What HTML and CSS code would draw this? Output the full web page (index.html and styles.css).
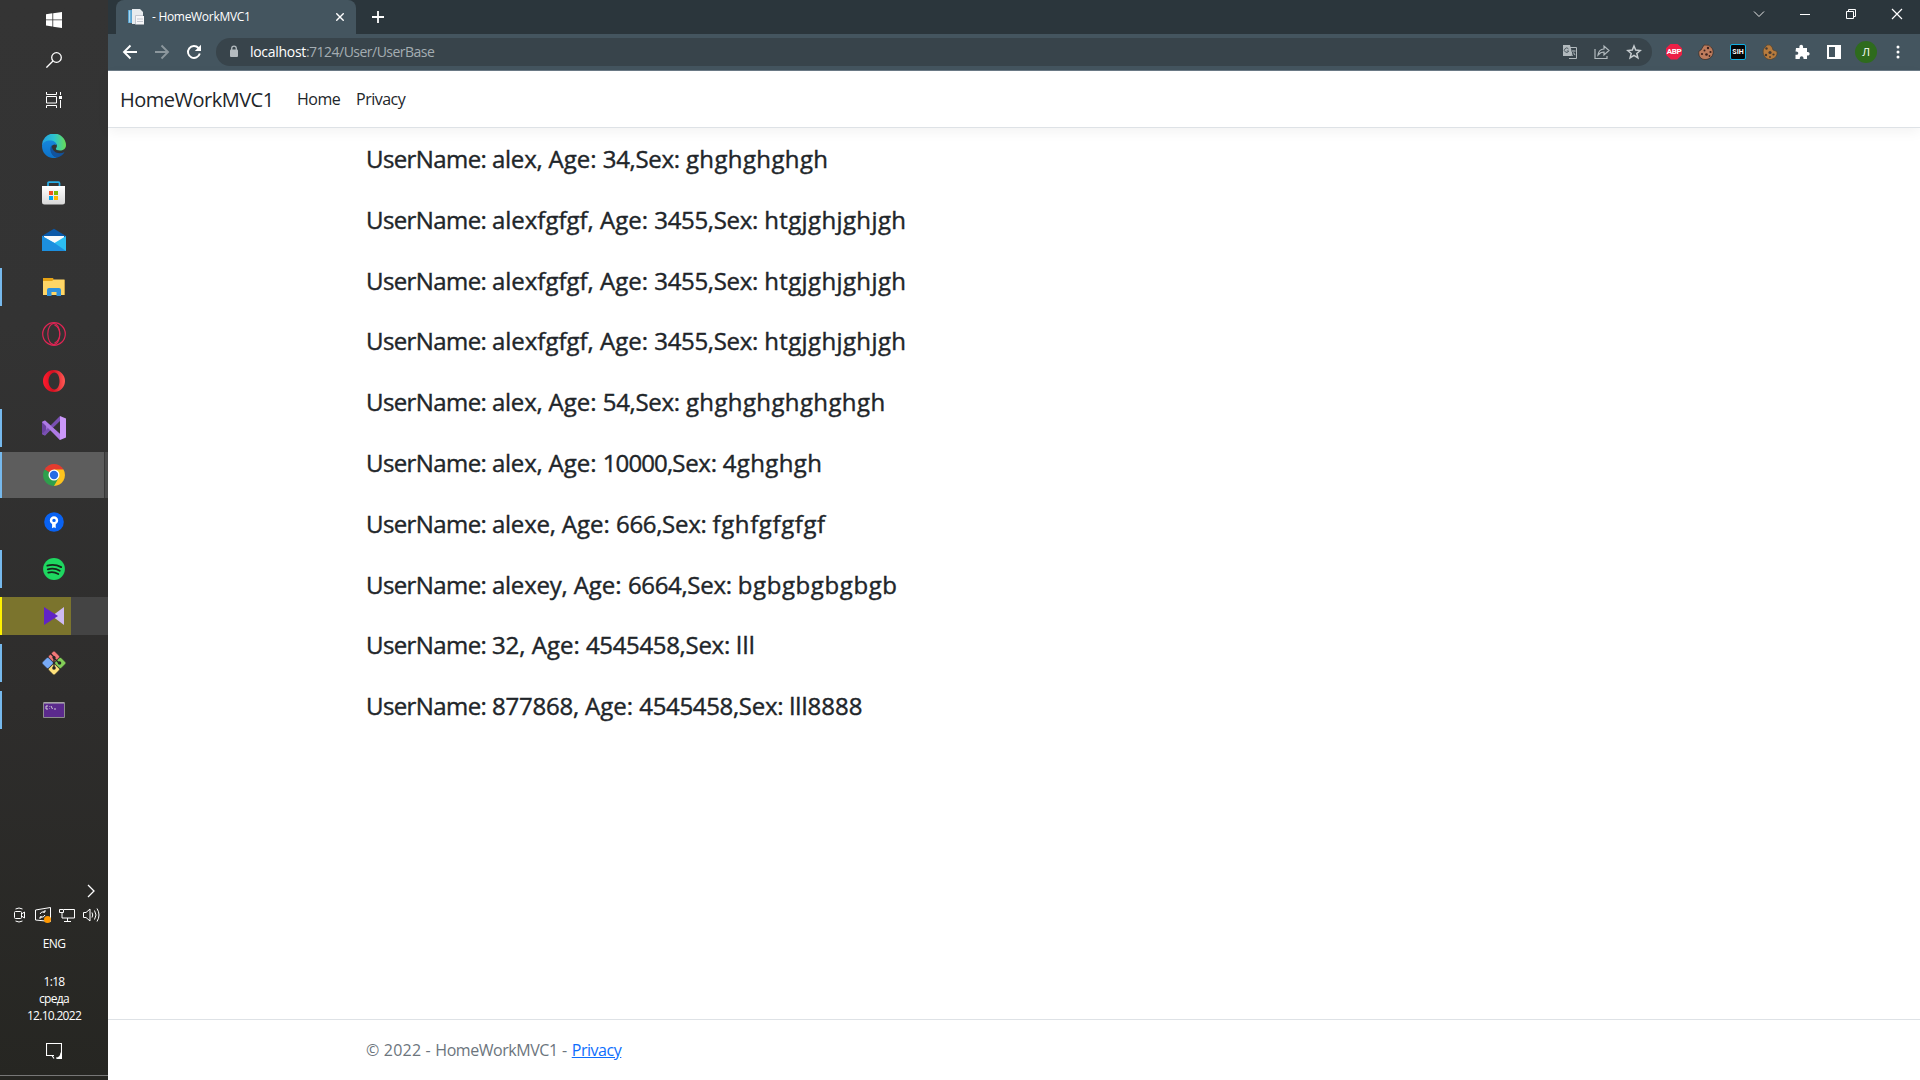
FILE: index.html
```html
<!DOCTYPE html>
<html lang="ru">
<head>
<meta charset="utf-8">
<title>- HomeWorkMVC1</title>
<link rel="stylesheet" href="styles.css">
</head>
<body>
<aside class="taskbar">
  <div class="system">
    <div class="sys-slot"><svg width="16" height="16" viewBox="0 0 16 16" fill="#fff"><path d="M0 2.2 6.4 1.3V7.4H0zM7.2 1.2 16 0v7.4H7.2zM0 8.3h6.4v6.2L0 13.6zM7.2 8.3H16V16l-8.8-1.3z"/></svg></div>
    <div class="sys-slot"><svg width="16" height="16" viewBox="0 0 16 16" fill="none" stroke="#fff" stroke-width="1.3"><circle cx="10.5" cy="5.5" r="4.8"/><path d="M7 9 .4 15.6"/></svg></div>
    <div class="sys-slot"><svg width="16" height="16" viewBox="0 0 16 16" fill="none" stroke="#fff" stroke-width="1"><path d="M.5 0v2.5h10V0M.5 16v-2.500h10V16M.5 4.500h10v6.500H.5zM14.500 0v3M14.500 8v8"/><path d="M13 4h3v3h-3z" fill="#fff" stroke="none"/></svg></div>
  </div>
  <div class="apps">
    <div class="app"><svg width="24" height="24" viewBox="0 0 24 24"><defs><linearGradient id="e1"><stop offset="0" stop-color="#239ee0"/><stop offset=".5" stop-color="#2cc3d0"/><stop offset="1" stop-color="#68dd55"/></linearGradient><linearGradient id="e2" x2="0" y2="1"><stop offset="0" stop-color="#1686dc"/><stop offset="1" stop-color="#0c72c9"/></linearGradient></defs><path d="M0 12A12 12 0 0 1 24 11c0 4-3 5.500-6 5.500-3.500 0-4.800-1.200-3.800-2.600C16.500 11 13 7.500 9 7.500c-5 0-8.500 2.500-9 4.500z" fill="url(#e1)"/><path d="M0 12c.5-3.500 4-5.500 8-5.500 3.500 0 6.500 2 6.500 4.500-4-2-6 2-5.500 5 .5 4 3 7 6.500 7.500C7 26 0 20 0 12z" fill="url(#e2)"/><path d="M9.500 11C6 17 11 23.500 15.500 23.500c3.500-1 6-3 7-5.500-5 2.500-12 1.500-13-7z" fill="#12539d"/></svg></div>
    <div class="app"><svg width="24" height="24" viewBox="0 0 24 24"><defs><linearGradient id="st" x2="0" y2="1"><stop stop-color="#fff"/><stop offset="1" stop-color="#d8d8d8"/></linearGradient></defs><path d="M6 7V2.200Q6 1.200 7 1.200h9.500q1 0 1 1V7" fill="none" stroke="#27aee8" stroke-width="1.700"/><path d="M0 5h23v16q0 2.500-2.500 2.500h-18Q0 23.500 0 21z" fill="url(#st)"/><path fill="#f25022" d="M7 10h4v4H7z"/><path fill="#7fba00" d="M12 10h4v4h-4z"/><path fill="#00a4ef" d="M7 15h4v4H7z"/><path fill="#ffb900" d="M12 15h4v4h-4z"/></svg></div>
    <div class="app"><svg width="24" height="24" viewBox="0 0 24 24"><path d="M0 8 12 .8 24 8v4H0z" fill="#0a58a8"/><path d="M2 8h20v10H2z" fill="#f7f9fb"/><path d="M0 8v15h24V8L12.500 15z" fill="#2cbdf1"/><path d="M0 8v15h24L12.500 15z" fill="#1c8fdf"/></svg></div>
    <div class="app running"><svg width="24" height="24" viewBox="0 0 24 24"><path d="M1 3h10l1 2h10.500v15H1z" fill="#e6a315"/><path d="M1 6h9l2-1.500h10.500V20H1z" fill="#ffd666"/><path d="M5 21v-6q0-2 2-2h10q2 0 2 2v6h-4.500v-4h-5v4z" fill="#2f91dc"/></svg></div>
    <div class="app"><svg width="24" height="24" viewBox="0 0 24 24" fill="none" stroke="#df2554"><circle cx="12" cy="12" r="11.300" stroke-width="1.200"/><ellipse cx="11.800" cy="12" rx="6" ry="10.500" stroke-width="1.100"/><path d="M12.500 3c7 3 7 15 0 18" stroke-width="1.200"/></svg></div>
    <div class="app"><svg width="24" height="24" viewBox="0 0 24 24"><defs><linearGradient id="op"><stop stop-color="#ff1b2d"/><stop offset=".45" stop-color="#d40f20"/><stop offset="1" stop-color="#ff5a55"/></linearGradient></defs><path fill-rule="evenodd" d="M12 1a11 11 0 1 0 0 22 11 11 0 0 0 0-22zm.5 2.500c3 0 5 3.800 5 8.500s-2 8.500-5 8.500-6-3.800-6-8.500 3-8.500 6-8.500z" fill="url(#op)"/></svg></div>
    <div class="app running"><svg width="24" height="24" viewBox="0 0 24 24"><path d="M0 6 3 4.500 18 18v6L8.500 13.500 3 19.500 0 18z" fill="#9a68d2"/><path d="M0 6 4 9v7l-4 2z" fill="#6a419f"/><path d="M3 19.500 18 5V0L0 18z" fill="#7950b2"/><path d="M0 6 3 4.500 18 18v6z" fill="#ad7ae4"/><path d="m18 0 6 2.500v19L18 24z" fill="#cb98fa"/></svg></div>
    <div class="app running active"><svg width="22" height="22" viewBox="0 0 22 22"><path d="M11 11 1.500 5.500A11 11 0 0 1 20.500 5.500z" fill="#e33b2e"/><path d="M11 11V5.500h9.500A11 11 0 0 1 11 22z" fill="#fcc31e"/><path d="M1.500 5.500A11 11 0 0 0 11 22l4.700-8.300L11 11z" fill="#2e9f4c"/><circle cx="11" cy="11" r="5.500" fill="#fff"/><circle cx="11" cy="11" r="4.200" fill="#276ce5"/></svg></div>
    <div class="app raised"><svg width="20" height="20" viewBox="0 0 21 21"><circle cx="10.500" cy="10.500" r="10.300" fill="#0962f2"/><circle cx="10.500" cy="8.800" r="3.100" fill="none" stroke="#fff" stroke-width="2.600"/><path d="M8.500 11.500h3.800V17l-1.800-1-2 1z" fill="#fff"/></svg></div>
    <div class="app running raised"><svg width="22" height="22" viewBox="0 0 23 23"><circle cx="11.500" cy="11.500" r="11.400" fill="#1ed760"/><path d="M4.500 8q7.500-2.200 14.500 1.500M5 11.800q7-1.800 12.500 1.500M5.500 15.300q5.500-1.500 10.500 1.400" fill="none" stroke="#16251b" stroke-width="1.900" stroke-linecap="round"/></svg></div>
    <div class="app running alert"><svg width="22" height="20" viewBox="0 0 22 20"><path d="M21 1v18L9 10z" fill="#cdbaf2"/><path d="M1 1v18l14-9z" fill="#6123c5"/></svg></div>
    <div class="app running"><svg width="24" height="24" viewBox="0 0 24 24"><g stroke="#252525" stroke-width=".5"><rect x="7.700" y="1.400" width="8.600" height="8.600" rx="1.300" transform="rotate(45 12 5.700)" fill="#f17878"/><rect x="1.400" y="7.700" width="8.600" height="8.600" rx="1.300" transform="rotate(45 5.700 12)" fill="#78aaf5"/><rect x="14" y="7.700" width="8.600" height="8.600" rx="1.300" transform="rotate(45 18.300 12)" fill="#82cd57"/><rect x="7.700" y="14" width="8.600" height="8.600" rx="1.300" transform="rotate(45 12 18.300)" fill="#ffe17a"/></g><path d="m8 2 4 4v11M12 7l5 5" fill="none" stroke="#242424" stroke-width="1.300"/><g fill="#242424"><circle cx="12" cy="6.500" r="1.600"/><circle cx="12" cy="17" r="1.800"/><circle cx="17.500" cy="12" r="1.800"/></g></svg></div>
    <div class="app running"><svg width="22" height="16" viewBox="0 0 22 16"><path d="M.5.5h21v15H.5z" fill="#5b2a8d" stroke="#8d8d8d"/><path d="M1 1h20" stroke="#bbb"/><path d="M5 4H3v3h2M6.500 4.500v.5M6.500 6.500V7M8 4l1.500 3M11 7h2" stroke="#ddd" fill="none" stroke-width=".9"/></svg></div>
  </div>
  <div class="tray">
    <svg class="chevron" width="8" height="14" viewBox="0 0 8 14" fill="none" stroke="#fff" stroke-width="1.300"><path d="m1 1 6 6-6 6"/></svg>
    <div class="tray-icons">
      <svg width="16" height="16" viewBox="0 0 16 16" fill="none" stroke="#fff"><rect x="3.500" y="4.500" width="7" height="7" rx="1"/><path d="m10.500 7 3-2v6l-3-2M4.500 2q3.500-2 7 0M4.500 14q3.500 2 7 0"/></svg>
      <svg width="16" height="16" viewBox="0 0 16 16" fill="none" stroke="#fff"><path d="M.5 3 15.500.5v14L.5 13zM5 7q1-3 5-2V3m0 2H8M10 8q-1 3-5 2v2m0-2h2"/><circle cx="12.500" cy="12.500" r="3.500" fill="#ff9800" stroke="none"/></svg>
      <svg width="16" height="16" viewBox="0 0 16 16" fill="none" stroke="#fff"><path d="M5 2.500h10.500v8.500H3V6M.5 2.500h4v3h-4zM8.500 11v3M5 14.500h7"/></svg>
      <svg width="17" height="16" viewBox="0 0 17 16" fill="none" stroke="#fff"><path d="M.5 5.500h2.500l4-3.500v12l-4-3.500H.5zM9 5.500q1.500 2.500 0 5M11.500 3.500q3 4.500 0 9M14 1.500q4 6.500 0 13"/></svg>
    </div>
    <div class="lang">ENG</div>
    <div class="clock"><span>1:18</span><span>среда</span><span>12.10.2022</span></div>
    <svg class="notice" width="16" height="16" viewBox="0 0 16 16" fill="none" stroke="#fff" stroke-width="1.100"><path d="M8 12.500H6L8 15.500M6 12.500H.5v-12h15V10"/><path d="M14.500 9.500a4 4 0 1 1-4.500 5q4 0 4.500-5z" fill="#fff" stroke="none"/></svg>
  </div>
</aside>
<div class="browser">
  <div class="tabstrip">
    <div class="tab">
      <svg width="16" height="16" viewBox="0 0 16 16"><path d="M0 1h5v13H0z" fill="#58a3d0"/><path d="M1.200 1.500h1v12h-1z" fill="#bfe3f5"/><path d="M4 0h8l3 3v12H4z" fill="#e7ebee"/><path d="M8 7h8v8.500H8z" fill="#f6f6f8"/><path d="M9 10h6M9 12.500h6M7.500 6.500H15M7.500 6.500v9" stroke="#c3c7d0" fill="none"/></svg>
      <span class="tab-title">- HomeWorkMVC1</span>
      <svg width="8" height="8" viewBox="0 0 8 8" stroke="#fff" stroke-width="1.400"><path d="m.3.300 7.400 7.400m0-7.400L.3 7.700"/></svg>
    </div>
    <svg class="newtab" width="12" height="12" viewBox="0 0 12 12" stroke="#fff" stroke-width="1.800"><path d="M6 0v12M0 6h12"/></svg>
    <div class="window-buttons">
      <svg width="12" height="12" viewBox="0 0 12 12" fill="none" stroke="#e8e8e8"><path d="m1 3.500 5 5 5-5"/></svg>
      <svg width="12" height="12" viewBox="0 0 12 12" stroke="#fff"><path d="M1 6.500h10"/></svg>
      <svg width="12" height="12" viewBox="0 0 12 12" fill="none" stroke="#fff"><path d="M1.500 3.500h7v7h-7zM3.500 3.500v-2h7v7h-2"/></svg>
      <svg width="12" height="12" viewBox="0 0 12 12" stroke="#fff" stroke-width="1.200"><path d="m1 1 10 10M11 1 1 11"/></svg>
    </div>
  </div>
  <div class="toolbar">
    <div class="nav-buttons">
      <svg width="16" height="16" viewBox="0 0 16 16" fill="none" stroke="#fff" stroke-width="1.900"><path d="M15 8H2M8.500 1.500 2 8l6.500 6.500"/></svg>
      <svg width="16" height="16" viewBox="0 0 16 16" fill="none" stroke="#8c979d" stroke-width="1.900"><path d="M1 8h13M7.500 1.500 14 8l-6.500 6.500"/></svg>
      <svg width="16" height="16" viewBox="0 0 16 16" fill="none" stroke="#fff" stroke-width="1.900"><path d="M13.800 9.500A6 6 0 1 1 12.500 4L14 5.500"/><path d="M15 .800V7H8.800z" fill="#fff" stroke="none"/></svg>
    </div>
    <div class="address">
      <svg width="10" height="13" viewBox="0 0 10 13"><rect x="1" y="4.500" width="8" height="7.500" rx="1" fill="#b4bbbf"/><path d="M2.700 5V3.500a2.300 2.300 0 0 1 4.600 0V5" fill="none" stroke="#b4bbbf" stroke-width="1.300"/></svg>
      <span class="url"><b>localhost</b>:7124/User/UserBase</span>
      <div class="address-icons">
        <svg width="16" height="16" viewBox="0 0 16 16"><path d="M6 3.500h8.500v11H7" fill="none" stroke="#b2babe"/><path d="M1 1h7l3 11H1z" fill="#b2babe"/><path d="M6.500 5a2.200 2.200 0 1 0 .2 2H4.800M9.500 7h4M11.500 6v1M13 7q-1 3-3 4.500M10.500 9l3 3" fill="none" stroke="#4e5b62"/><path d="M10 7h3.500M11.500 8.500l1.500 2.500" stroke="#b2babe"/></svg>
        <svg width="16" height="16" viewBox="0 0 16 16" fill="none" stroke="#b2babe" stroke-width="1.200"><path d="M1 5v9.500h12V12"/><path d="M4 11q.5-5.500 6-6V2l5 4.500-5 4.500V8Q6.500 8 4 11z"/></svg>
        <svg width="16" height="16" viewBox="0 0 16 16" fill="none" stroke="#c6cccf" stroke-width="1.500"><path d="m8 2 1.700 4.100 4.500.4-3.400 2.900 1.100 4.400L8 11.400l-3.900 2.400 1.100-4.400-3.400-2.900 4.500-.4z"/></svg>
      </div>
    </div>
    <div class="extensions">
      <div class="abp">ABP</div>
      <svg width="16" height="16" viewBox="0 0 16 16"><path d="M6 1q5-1 8 3c3 5 0 11-6 11.500C2 16 0 11 1 7l2-1z" fill="#bd7b5c" stroke="#322925" stroke-width=".7"/><g fill="#3b211d"><circle cx="10" cy="4" r="1.200"/><circle cx="6.500" cy="6.500" r="1"/><circle cx="12.500" cy="8" r="1.100"/><circle cx="4" cy="10" r="1.100"/><circle cx="8.500" cy="10.500" r="1.300"/><circle cx="11.500" cy="12" r=".9"/></g></svg>
      <div class="sih">SIH</div>
      <svg width="16" height="16" viewBox="0 0 16 16"><path d="M5 1q3-1 5 2l1 3 4 1.500q1 6-6 8C3 16 0 10 1.500 5z" fill="#b77b3d" stroke="#55422d" stroke-width=".7"/><g fill="#453b34"><circle cx="4.500" cy="4.500" r="1.200"/><circle cx="8" cy="8.500" r="1.600"/><circle cx="4" cy="11" r="1.200"/><circle cx="11.500" cy="10.500" r="1.100"/><circle cx="8" cy="13" r=".9"/></g></svg>
      <svg width="16" height="16" viewBox="0 0 16 16" fill="#fff"><path d="M2 4h3.500C4.500-.3 10 -.3 9 4h4v4c3.500-.8 3.500 4.300 0 3.500V15H9.500c.5-3.700-4.200-3.700-3.700 0H1.500v-4.200C5.200 11.300 5.200 7 1.500 7.500z"/></svg>
      <svg width="16" height="16" viewBox="0 0 16 16"><path d="M1 1h14v14H1zM3 3v10h6V3z" fill="#fff" fill-rule="evenodd"/></svg>
      <div class="avatar">Л</div>
      <svg width="16" height="16" viewBox="0 0 16 16" fill="#fff"><circle cx="8" cy="3" r="1.500"/><circle cx="8" cy="8" r="1.500"/><circle cx="8" cy="13" r="1.500"/></svg>
    </div>
  </div>
  <div class="page">
    <header class="navbar"><span class="brand">HomeWorkMVC1</span><span class="nav-link home">Home</span><span class="nav-link">Privacy</span></header>
    <main class="users">
      <h4><span class="label">UserName: </span><span class="name">alex, </span>Age: <span class="age">34,</span><span class="sex">Sex: </span><span class="value">ghghghghgh</span></h4>
      <h4><span class="label">UserName: </span>alexfgfgf, Age: <span class="age">3455,</span><span class="sex">Sex: </span><span class="value">htgjghjghjgh</span></h4>
      <h4><span class="label">UserName: </span>alexfgfgf, Age: <span class="age">3455,</span><span class="sex">Sex: </span><span class="value">htgjghjghjgh</span></h4>
      <h4><span class="label">UserName: </span>alexfgfgf, Age: <span class="age">3455,</span><span class="sex">Sex: </span><span class="value">htgjghjghjgh</span></h4>
      <h4><span class="label">UserName: </span><span class="name">alex, </span>Age: <span class="age">54,</span><span class="sex">Sex: </span><span class="value">ghghghghghghgh</span></h4>
      <h4><span class="label">UserName: </span><span class="name">alex, </span>Age: <span class="age tight">10000,</span><span class="sex">Sex: </span><span class="value">4ghghgh</span></h4>
      <h4><span class="label">UserName: </span><span class="name">alexe, </span>Age: <span class="age">666,</span><span class="sex">Sex: </span><span class="value loose">fghfgfgfgf</span></h4>
      <h4><span class="label">UserName: </span><span class="name">alexey, </span>Age: <span class="age">6664,</span><span class="sex">Sex: </span><span class="value loose">bgbgbgbgbgb</span></h4>
      <h4><span class="label">UserName: </span>32, Age: <span class="age">4545458,</span><span class="sex">Sex: </span><span class="value">lll</span></h4>
      <h4><span class="label">UserName: </span><span class="name">877868, </span>Age: <span class="age">4545458,</span><span class="sex">Sex: </span>lll8888</h4>
    </main>
    <footer class="footer"><span>© 2022 - </span><span class="site">HomeWorkMVC1</span><span> - </span><a href="#">Privacy</a></footer>
  </div>
</div>
</body>
</html>
```
FILE: styles.css
```css
* { box-sizing: border-box; }
body { margin: 0; width: 1920px; height: 1080px; display: flex; overflow: hidden; background: #fff; font-family: "Open Sans", "Noto Sans", sans-serif; color: #212529; }
svg { display: block; flex: none; }

.taskbar { width: 108px; height: 1080px; flex: none; display: flex; flex-direction: column; background: linear-gradient(#343434, #333 30%, #2e2d2c 65%, #262622); color: #fff; }
.system { height: 122px; flex: none; }
.sys-slot { height: 40px; display: flex; align-items: center; justify-content: center; }
.app { height: 47px; padding-top: 1px; display: flex; align-items: center; justify-content: center; background-repeat: no-repeat; }
.raised { padding-top: 0; }
.running { background-image: linear-gradient(#76b9ed, #76b9ed); background-size: 2px 38px; background-position: 0 5px; }
.active { background-image: linear-gradient(#76b9ed, #76b9ed), linear-gradient(#5d5d5d, #5d5d5d), linear-gradient(#383838, #383838), linear-gradient(#4b4b4b, #4b4b4b); background-size: 2px 46px, 104px 46px, 105px 46px, 108px 46px; background-position: 0 1px; }
.alert { background-image: linear-gradient(#fff200, #fff200), linear-gradient(#7b742d, #7b742d), linear-gradient(#444, #444); background-size: 2px 38px, 71px 38px, 108px 38px; }
.tray { margin-top: auto; height: 196px; display: flex; flex-direction: column; align-items: center; font-size: 12px; line-height: 16px; border-bottom: 4px solid #262622; box-shadow: inset 0 -1px #777; }
.chevron { align-self: flex-end; margin-right: 13px; }
.tray-icons { display: flex; gap: 8px; align-self: flex-start; margin: 9px 0 0 11px; }
.lang { margin-top: 13px; letter-spacing: -.6px; }
.clock { margin-top: 21px; display: flex; flex-direction: column; align-items: center; line-height: 17px; letter-spacing: -.7px; }
.notice { margin-top: 19px; }

.browser { width: 1812px; display: flex; flex-direction: column; }
.tabstrip { height: 34px; padding-left: 8px; display: flex; background: #2b363c; }
.tab { width: 240px; height: 34px; padding: 0 12px; display: flex; align-items: center; border-radius: 8px 8px 0 0; background: #44555f; color: #fff; }
.tab-title { flex: 1; margin: -1px 0 0 8px; font-size: 12px; letter-spacing: -.3px; }
.newtab { margin: 11px 0 0 16px; }
.window-buttons { margin: 8px 17px 0 auto; display: flex; gap: 34px; }
.toolbar { height: 37px; padding: 0 14px 1px; display: flex; align-items: center; background: #44555f; border-bottom: 1px solid #6c7b87; }
.nav-buttons { display: flex; gap: 16px; }
.address { width: 1436px; height: 28px; margin-left: 14px; padding: 0 10px 0 13px; border-radius: 14px; display: flex; align-items: center; background: #38444b; }
.url { margin-left: 11px; font-size: 14px; letter-spacing: -.52px; color: #a4adb2; }
.url b { font-weight: 400; letter-spacing: -.3px; color: #fff; }
.address-icons { margin-left: auto; display: flex; gap: 16px; }
.extensions { margin-left: 14px; display: flex; align-items: center; gap: 16px; }
.abp, .sih, .avatar { flex: none; display: flex; align-items: center; justify-content: center; color: #fff; }
.abp { width: 16px; height: 16px; background: #ec1f46; clip-path: polygon(30% 0, 70% 0, 100% 30%, 100% 70%, 70% 100%, 30% 100%, 0 70%, 0 30%); font: 700 8px "Roboto", sans-serif; letter-spacing: -.3px; }
.sih { width: 16px; height: 16px; border: 1px solid #12afe4; border-radius: 2px; background: #050709; font: 700 7px "Roboto", sans-serif; }
.avatar { width: 22px; height: 22px; margin: 0 -3px; border-radius: 50%; background: #2e6b1d; font-size: 11px; }

.page { height: 1009px; display: flex; flex-direction: column; }
.navbar { height: 57px; padding: 0 12px; display: flex; align-items: center; border-bottom: 1px solid #dee2e6; box-shadow: 0 4px 12px rgba(0, 0, 0, .05); font-size: 16px; letter-spacing: -.5px; }
.brand { width: 169px; font-size: 20px; }
.nav-link { margin-left: 8px; }
.home { width: 51px; }
.users { flex: 1; padding: 17px 0 0 258px; }
.users h4 { width: max-content; margin: 0 0 32px; font-size: 24px; font-weight: 500; line-height: 28.8px; -webkit-text-stroke: .4px #212529; }
.label { letter-spacing: -.6px; }
.name { letter-spacing: -.2px; }
.age { letter-spacing: -.35px; }
.age.tight { letter-spacing: -.9px; }
.sex { letter-spacing: -.25px; }
.value { letter-spacing: .38px; }
.value.loose { letter-spacing: .6px; }
.footer { height: 61px; padding-left: 258px; border-top: 1px solid #dee2e6; line-height: 61px; font-size: 16px; letter-spacing: .2px; color: #6c757d; white-space: pre; }
.site { letter-spacing: -.45px; }
.footer a { color: #0d6efd; letter-spacing: -.45px; }
```
